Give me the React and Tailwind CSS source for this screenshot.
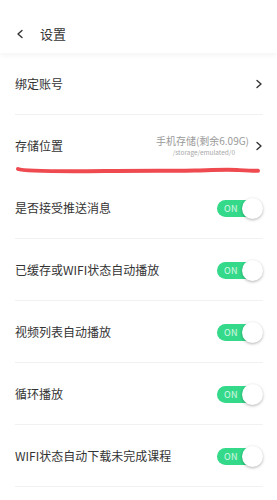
import React from 'react';

const font = { fontFamily: '"Noto Sans CJK SC", "Noto Sans", sans-serif' };

const Chevron = () => (
    <svg width="8" height="10" viewBox="0 0 8 10" className="shrink-0">
        <path d="M2 1.5 L6 5 L2 8.5" fill="none" stroke="#333" strokeWidth="1.4" strokeLinecap="round" strokeLinejoin="round" />
    </svg>
);

const Toggle = () => (
    <div className="relative w-[46px] h-[20px] shrink-0">
        <div className="absolute left-0 top-[2px] w-[40px] h-[17px] rounded-full bg-[#34d98a] flex items-center pl-[7px]">
            <span className="text-[9px] leading-none text-white/80 tracking-wide">ON</span>
        </div>
        <div className="absolute right-0 top-0 w-[21px] h-[21px] rounded-full bg-white shadow-[0_1px_3px_rgba(0,0,0,0.3)]"></div>
    </div>
);

const ToggleRow = ({ label }) => (
    <div className="h-[62px] ml-[15px] mr-[14px] border-b border-[#f1f1f1] flex items-center justify-between">
        <span className="text-[12px] text-[#333]">{label}</span>
        <Toggle />
    </div>
);

export default function App() {
    return (
        <div className="w-[277px] h-[500px] bg-white overflow-hidden" style={font}>

            <div className="h-[53px] flex items-end pb-[10px] bg-white shadow-[0_2px_6px_rgba(0,0,0,0.05)] relative z-10">
                <svg width="8" height="10" viewBox="0 0 8 10" className="ml-[16px] mb-[4px]">
                    <path d="M6 1.5 L2 5 L6 8.5" fill="none" stroke="#333" strokeWidth="1.4" strokeLinecap="round" strokeLinejoin="round" />
                </svg>
                <span className="ml-[16px] text-[13px] text-[#333]">设置</span>
            </div>

            <div className="h-[62px] ml-[15px] mr-[14px] border-b border-[#f1f1f1] flex items-center justify-between">
                <span className="text-[12px] text-[#333]">绑定账号</span>
                <Chevron />
            </div>

            <div className="h-[62px] ml-[15px] mr-[14px] flex items-center justify-between relative">
                <span className="text-[12px] text-[#333] -mt-[1px]">存储位置</span>
                <div className="flex items-center gap-[6px] -mt-[1px]">
                    <div className="flex flex-col items-end">
                        <span className="text-[10px] leading-[13px] text-[#9a9a9a]">手机存储(剩余6.09G)</span>
                        <span className="text-[6.5px] leading-[10px] text-[#a8a8a8] mr-[14px]">/storage/emulated/0</span>
                    </div>
                    <Chevron />
                </div>
                <svg className="absolute left-0 top-[50px]" width="246" height="10" viewBox="0 0 246 10">
                    <path d="M3 4 C8 6 40 6.5 90 6 C130 5.5 160 6 180 5.5 C200 5 210 4.5 222 5 C232 5.6 238 6 243 5.8" fill="none" stroke="#ee4a4f" strokeWidth="4" strokeLinecap="round" />
                </svg>
            </div>

            <ToggleRow label="是否接受推送消息" />
            <ToggleRow label="已缓存或WIFI状态自动播放" />
            <ToggleRow label="视频列表自动播放" />
            <ToggleRow label="循环播放" />
            <ToggleRow label="WIFI状态自动下载未完成课程" />
        </div>
    );
}
